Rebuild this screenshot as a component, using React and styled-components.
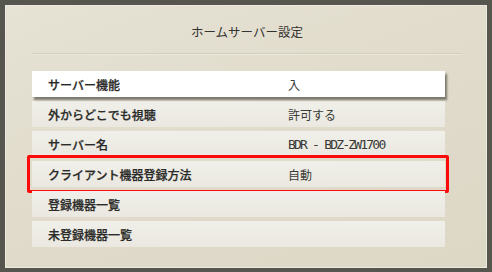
import styled, { createGlobalStyle } from "styled-components";

const Global = createGlobalStyle`
  html, body {
    margin: 0;
    padding: 0;
    background: #56564f;
  }
  body {
    width: 492px;
    height: 272px;
    overflow: hidden;
    font-family: "Noto Sans CJK JP", "Noto Sans", sans-serif;
  }
`;

const Screen = styled.div`
  width: 492px;
  height: 272px;
  padding: 5px 5px 4px 5px;
  box-sizing: border-box;
`;

const Panel = styled.div`
  height: 100%;
  box-sizing: border-box;
  display: flex;
  flex-direction: column;
  background: linear-gradient(160deg, #e6e2d4 0%, #dfdac9 60%, #ddd8c6 100%);
  border: 1px solid #ece9df;
`;

const Title = styled.div`
  margin: 0 24px 0 26px;
  padding: 16px 0 12px;
  line-height: 19px;
  text-align: center;
  font-size: 12.5px;
  color: #333330;
  border-bottom: 1px solid #d3cebd;
  box-shadow: 0 1px 0 #ebe8de;
`;

const List = styled.div`
  display: flex;
  flex-direction: column;
  gap: 4px;
  margin: 17px 41px 0 26px;
`;

const Row = styled.div`
  position: relative;
  height: 26px;
  display: flex;
  align-items: center;
  padding-left: 16px;
  font-size: 12px;
  color: #2a2a28;
  background: ${(p) =>
    p.$selected ? "#ffffff" : "linear-gradient(180deg, #f0efe9, #eae8e0)"};
  box-shadow: ${(p) =>
    p.$selected ? "2px 3px 2px rgba(40, 40, 35, 0.55)" : "none"};
  z-index: ${(p) => (p.$selected ? 1 : 0)};
`;

const Label = styled.span`
  width: 240px;
  font-weight: 500;
  -webkit-text-stroke: 0.25px #2a2a28;
`;

const Value = styled.span`
  font-weight: 400;
  font-family: ${(p) =>
    p.$mono
      ? '"DejaVu Sans Mono", "Liberation Mono", monospace'
      : '"Noto Sans CJK JP", sans-serif'};
  font-size: ${(p) => (p.$mono ? "13px" : "12px")};
  letter-spacing: ${(p) => (p.$mono ? "-1.8px" : "0")};
  color: #3a3a37;
`;

const Highlight = styled.div`
  position: absolute;
  top: -6px;
  bottom: -6px;
  left: -5px;
  right: -4px;
  border: 3px solid #ff0a0a;
  border-radius: 2px;
  pointer-events: none;
`;

const items = [
  { label: "サーバー機能", value: "入", selected: true },
  { label: "外からどこでも視聴", value: "許可する" },
  { label: "サーバー名", value: "BDR - BDZ-ZW1700", mono: true },
  { label: "クライアント機器登録方法", value: "自動", marked: true },
  { label: "登録機器一覧" },
  { label: "未登録機器一覧" },
];

export default function App() {
  return (
    <Screen>
      <Global />
      <Panel>
        <Title>ホームサーバー設定</Title>
        <List>
          {items.map((it) => (
            <Row key={it.label} $selected={it.selected}>
              <Label>{it.label}</Label>
              {it.value && <Value $mono={it.mono}>{it.value}</Value>}
              {it.marked && <Highlight />}
            </Row>
          ))}
        </List>
      </Panel>
    </Screen>
  );
}
